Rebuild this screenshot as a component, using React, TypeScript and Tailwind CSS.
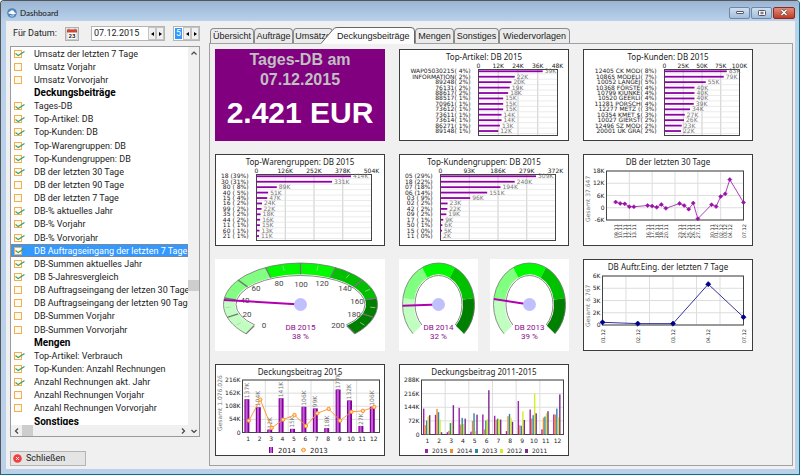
import { useState } from "react";

const MONTHS = [1, 2, 3, 4, 5, 6, 7, 8, 9, 10, 11, 12];
const DB_2015 = [137, 104, 12, 141, 15, 106, 99, 18, 177, 132, 27, 106];
const DB_2014 = [49, 135, 19, 53, 72, 27, 79, 97, 49, 85, 89, 105];
const DB_2013 = [74, 118, 60, 88, 112, 74, 84, 109, 46, 102, 95, 137];
const DB_2012 = [95, 79, 65, 56, 18, 81, 81, 88, 123, 216, 112, 91];
const DB_2011 = [102, 12, 155, 84, 105, 234, 79, 67, 77, 112, 123, 212];

type Entry = { label: string; heading?: boolean; on?: boolean };

const entries: Entry[] = [
  { label: "Umsatz der letzten 7 Tage", on: true },
  { label: "Umsatz Vorjahr" },
  { label: "Umsatz Vorvorjahr" },
  { label: "Deckungsbeiträge", heading: true },
  { label: "Tages-DB", on: true },
  { label: "Top-Artikel: DB", on: true },
  { label: "Top-Kunden: DB", on: true },
  { label: "Top-Warengruppen: DB", on: true },
  { label: "Top-Kundengruppen: DB", on: true },
  { label: "DB der letzten 30 Tage", on: true },
  { label: "DB der letzten 90 Tage" },
  { label: "DB der letzten 7 Tage" },
  { label: "DB-% aktuelles Jahr", on: true },
  { label: "DB-% Vorjahr", on: true },
  { label: "DB-% Vorvorjahr", on: true },
  { label: "DB Auftragseingang der letzten 7 Tage", on: true },
  { label: "DB-Summen aktuelles Jahr", on: true },
  { label: "DB 5-Jahresvergleich", on: true },
  { label: "DB Auftragseingang der letzen 30 Tage" },
  { label: "DB Auftragseingang der letzten 90 Tage" },
  { label: "DB-Summen Vorjahr" },
  { label: "DB-Summen Vorvorjahr" },
  { label: "Mengen", heading: true },
  { label: "Top-Artikel: Verbrauch", on: true },
  { label: "Top-Kunden: Anzahl Rechnungen", on: true },
  { label: "Anzahl Rechnungen akt. Jahr", on: true },
  { label: "Anzahl Rechnungen Vorjahr" },
  { label: "Anzahl Rechnungen Vorvorjahr" },
  { label: "Sonstiges", heading: true },
];

const SELECTED = "DB Auftragseingang der letzten 7 Tage";
const CHART = "block h-[92px] w-[170px] bg-white outline outline-1 -outline-offset-1 outline-[#3c3c3c]";
const TITLE = "fill-[#222] text-[8px] font-['Noto_Sans',sans-serif]";
const TINY = "fill-[#222] text-[6px] font-['DejaVu_Sans',sans-serif]";
const TINY_GRAY = "fill-[#777] text-[6px] font-['DejaVu_Sans',sans-serif]";
const DATE = "fill-[#222] text-[5px] font-['DejaVu_Sans',sans-serif]";

function ChartTitle({ children }: { children: string }) {
  return (
    <text x="85" y="11" textAnchor="middle" className={TITLE}>
      {children}
    </text>
  );
}

function BarRanking({ title, x0, x1, step, rows }: {
  title: string;
  x0: number;
  x1: number;
  step: number;
  rows: Array<[string, number]>;
}) {
  const max = step * 4;
  const w = x1 - x0;
  return (
    <svg viewBox="0 0 170 92" className={CHART} role="img" aria-label={title}>
      <ChartTitle>{title}</ChartTitle>
      {[1, 2, 3].map((i) => (
        <path key={i} d={`M${x0 + (w * i) / 4} 21V87`} stroke="#ccc" />
      ))}
      {rows.map((_, i) => (
        <path key={i} d={`M${x0} ${24.8 + i * 5.43}H${x1}`} stroke="#e3e3e3" strokeWidth="0.7" />
      ))}
      <rect x={x0} y="20.5" width={w} height="66" fill="none" stroke="#444" />
      {[0, 1, 2, 3, 4].map((i) => (
        <text key={i} x={x0 + (w * i) / 4} y="18.5" textAnchor="middle" className={TINY}>
          {i === 0 ? "0" : `${step * i}K`}
        </text>
      ))}
      {rows.map(([name, value], i) => {
        const y = 22.3 + i * 5.43;
        return (
          <g key={name}>
            <text x={x0 - 8} y={y + 2} textAnchor="end" className={TINY}>{name}</text>
            <rect x={x0} y={y - 0.9} width={(value / max) * w} height="1.8" fill="#9000a8" />
            <text x={x0 + (value / max) * w + 2} y={y + 2} className={TINY_GRAY}>{value}K</text>
          </g>
        );
      })}
    </svg>
  );
}

function LineChart({ title, total, x0, yLabels, min, max, slots, points, color, r, columns }: {
  title: string;
  total: string;
  x0: number;
  yLabels: string[];
  min: number;
  max: number;
  slots: number;
  points: Array<[number, number, string]>;
  color: string;
  r: number;
  columns: number;
}) {
  const x1 = 160.5;
  const top = 17;
  const bottom = 66;
  const px = (slot: number) => x0 + (slot / slots) * (x1 - x0);
  const py = (v: number) => bottom - ((v - min) / (max - min)) * (bottom - top);
  return (
    <svg viewBox="0 0 170 92" className={CHART} role="img" aria-label={title}>
      <ChartTitle>{title}</ChartTitle>
      {Array.from({ length: columns - 1 }, (_, i) => (
        <path key={i} d={`M${x0 + ((i + 1) * (x1 - x0)) / columns} ${top}V${bottom}`} stroke="#ddd" />
      ))}
      {yLabels.map((label, i) => (
        <g key={label}>
          <path d={`M${x0} ${top + (i * (bottom - top)) / 4}H${x1}`} stroke="#ddd" />
          <text x={x0 - 2} y={top + 2 + (i * (bottom - top)) / 4} textAnchor="end" className={TINY}>{label}</text>
        </g>
      ))}
      <rect x={x0} y={top} width={x1 - x0} height={bottom - top} fill="none" stroke="#444" />
      <text transform="translate(7 68) rotate(-90)" className={TINY_GRAY}>{total}</text>
      <polyline
        points={points.map(([s, v]) => `${px(s)},${py(v)}`).join(" ")}
        fill="none"
        stroke={color}
        strokeWidth="0.8"
      />
      {points.map(([s, v, date]) => (
        <g key={date}>
          <path
            d={`M${px(s)} ${py(v) - r}L${px(s) + r} ${py(v)}L${px(s)} ${py(v) + r}L${px(s) - r} ${py(v)}Z`}
            fill={color}
            stroke={color}
            strokeWidth="0.6"
          />
          <text transform={`translate(${px(s) + 2} 70) rotate(-90)`} textAnchor="end" className={DATE}>{date}</text>
        </g>
      ))}
    </svg>
  );
}

const ringColors = ["#c0ffc0", "#80ff80", "#00fb00", "#00c000", "#008000"];

function Gauge({ label, value, cx, rx, scale }: {
  label: string;
  value: number;
  cx: number;
  rx: number;
  scale?: boolean;
}) {
  const cy = 45.5;
  const ry = 41.5;
  const inX = rx - 11.5;
  const inY = 30;
  const at = (v: number, ax: number, ay: number) => {
    const a = ((135 + (v / 200) * 270) * Math.PI) / 180;
    return `${(cx + Math.cos(a) * ax).toFixed(2)} ${(cy + Math.sin(a) * ay).toFixed(2)}`;
  };
  const scaleLabels = [
    [0, 49, 66], [20, 32, 55], [40, 30, 41], [60, 41, 29], [80, 64, 24], [100, 86, 25],
    [120, 107, 24], [140, 130, 29], [160, 142, 42], [180, 139, 55], [200, 123, 66],
  ];
  return (
    <svg
      viewBox={scale ? "0 0 170 92" : "0 0 79 92"}
      className={scale ? "block h-[92px] w-[170px] bg-white" : "block h-[92px] w-[79px] bg-white"}
      role="img"
      aria-label={`${label}: ${value} %`}
    >
      {ringColors.map((c, i) => (
        <path
          key={c}
          d={`M${at(i * 40, rx, ry)}A${rx} ${ry} 0 0 1 ${at(i * 40 + 40, rx, ry)}L${at(i * 40 + 40, inX, inY)}A${inX} ${inY} 0 0 0 ${at(i * 40, inX, inY)}Z`}
          fill={c}
        />
      ))}
      <path d={`M${at(0, rx, ry)}A${rx} ${ry} 0 1 1 ${at(200, rx, ry)}`} fill="none" stroke="#777" strokeWidth="0.8" />
      <path
        d={`M${at(0, inX - 1, inY - 1)}A${inX - 1} ${inY - 1} 0 1 1 ${at(200, inX - 1, inY - 1)}`}
        fill="none"
        stroke="#888"
        strokeWidth="1"
      />
      {scale &&
        scaleLabels.map(([v, x, y]) => (
          <g key={v}>
            <path d={`M${at(v, rx, ry)}L${at(v, inX, inY)}`} stroke="#777" strokeWidth="1.3" />
            {v < 200 && <path d={`M${at(v + 10, rx - 2, ry - 2)}L${at(v + 10, rx - 7, ry - 7)}`} stroke="#b8c8b8" strokeWidth="0.8" />}
            <text x={x} y={y + 3} textAnchor="middle" className="fill-[#444] text-[8px] font-['Roboto',sans-serif]">{v}</text>
          </g>
        ))}
      <path d={`M${cx} ${cy}L${at(value, rx, ry)}`} stroke="#b000b0" strokeWidth="2" />
      <circle cx={cx} cy={cy} r="6.5" fill="#c0c0ff" />
      <text x={cx} y="71" textAnchor="middle" className="fill-[#8a0a8a] text-[8px] font-['Roboto',sans-serif]">{label}</text>
      <text x={cx} y="80" textAnchor="middle" className="fill-[#8a0a8a] text-[8px] font-['Roboto',sans-serif]">{value} %</text>
    </svg>
  );
}

function MonthGrid({ x0, x1, bottom, step }: { x0: number; x1: number; bottom: number; step: number }) {
  const h = bottom - 16;
  return (
    <>
      {[2, 4, 6, 8, 10].map((i) => (
        <path key={i} d={`M${x0 + ((x1 - x0) * i) / 12} 16V${bottom}`} stroke="#ddd" />
      ))}
      {[0, 1, 2, 3, 4].map((i) => (
        <g key={i}>
          <path d={`M${x0} ${16 + (h * i) / 4}H${x1}`} stroke="#ddd" />
          <text x={x0 - 2} y={18 + (h * i) / 4} textAnchor="end" className={TINY}>
            {i === 4 ? "0" : `${step * (4 - i)}K`}
          </text>
        </g>
      ))}
      <rect x={x0} y="16" width={x1 - x0} height={h} fill="none" stroke="#444" />
      {MONTHS.map((m, i) => (
        <text key={m} x={x0 + ((x1 - x0) * (i + 0.5)) / 12} y={bottom + 8} textAnchor="middle" className={TINY}>{m}</text>
      ))}
    </>
  );
}

function YearChart() {
  const x = (i: number) => 27.5 + 11.4 * (i + 0.5);
  const y = (v: number) => 68.5 - (v / 216) * 52.5;
  return (
    <svg viewBox="0 0 170 92" className={CHART} role="img" aria-label="Deckungsbeitrag 2015">
      <ChartTitle>Deckungsbeitrag 2015</ChartTitle>
      <MonthGrid x0={27.5} x1={164.5} bottom={68.5} step={54} />
      <text transform="translate(7 67) rotate(-90)" className={TINY_GRAY}>Gesamt 1.076.026</text>
      {DB_2015.map((v, i) => (
        <g key={i}>
          <rect x={x(i) - 3.8} y={y(v)} width="5" height={68.5 - y(v)} fill="#85009a" />
          <rect x={x(i) - 2.6} y={y(v)} width="2" height={68.5 - y(v)} fill="#c060d4" />
          <text transform={`translate(${x(i) + 0.5} ${y(v) - 1}) rotate(-90)`} className={TINY_GRAY}>{v}K</text>
        </g>
      ))}
      <polyline points={DB_2014.map((v, i) => `${x(i) + 0.7},${y(v)}`).join(" ")} fill="none" stroke="#ff9020" strokeWidth="0.9" />
      {DB_2014.map((v, i) => (
        <circle key={i} cx={x(i) + 0.7} cy={y(v)} r="1.7" fill="#ffe0b0" stroke="#ff9020" />
      ))}
      <rect x="54" y="83" width="4" height="6" fill="#85009a" />
      <rect x="55" y="83" width="2" height="6" fill="#c060d4" />
      <text x="63" y="89" className="fill-[#222] text-[7px] font-['DejaVu_Sans',sans-serif]">2014</text>
      <path d="M86 86H91" stroke="#ff9020" />
      <circle cx="88.5" cy="86" r="1.8" fill="#ffe0b0" stroke="#ff9020" />
      <text x="95" y="89" className="fill-[#222] text-[7px] font-['DejaVu_Sans',sans-serif]">2013</text>
    </svg>
  );
}

const years = [
  { year: 2015, color: "#a020b0", data: DB_2015 },
  { year: 2014, color: "#f58a2c", data: DB_2014 },
  { year: 2013, color: "#2c86a8", data: DB_2013 },
  { year: 2012, color: "#d2f020", data: DB_2012 },
  { year: 2011, color: "#7a2a90", data: DB_2011 },
];

function FiveYearChart() {
  return (
    <svg viewBox="0 0 170 92" className={CHART} role="img" aria-label="Deckungsbeitrag 2011-2015">
      <ChartTitle>Deckungsbeitrag 2011-2015</ChartTitle>
      <MonthGrid x0={22.5} x1={164.5} bottom={70.5} step={72} />
      {years.map(({ year, color, data }, s) => (
        <g key={year}>
          {data.map((v, i) => {
            const h = (v / 288) * 54.5;
            return <rect key={i} x={24 + i * 11.83 + s * 1.5} y={70.5 - h} width="1.4" height={h} fill={color} />;
          })}
          <rect x={26 + s * 25} y="85" width="3" height="4" fill={color} />
          <text x={33 + s * 25} y="89" className={TINY}>{year}</text>
        </g>
      ))}
    </svg>
  );
}

function Spinner({ name }: { name: string }) {
  return (
    <>
      <button aria-label={`${name} zurück`} className="flex w-2 items-center justify-center border border-[#c4c4c4] bg-[#f0f0f0]">
        <svg viewBox="0 0 3 4" className="h-1 w-[3px] shrink-0"><path d="M3 0V4L0 2Z" /></svg>
      </button>
      <button aria-label={`${name} vor`} className="flex w-2 items-center justify-center border border-[#c4c4c4] bg-[#f0f0f0]">
        <svg viewBox="0 0 3 4" className="h-1 w-[3px] shrink-0"><path d="M0 0V4L3 2Z" /></svg>
      </button>
    </>
  );
}

function Chevron({ d, label }: { d: string; label: string }) {
  return (
    <button aria-label={label} className="flex size-[11px] shrink-0 items-center justify-center">
      <svg viewBox="0 0 6 6" className="size-[6px]" fill="none" stroke="#444" strokeWidth="1.2"><path d={d} /></svg>
    </button>
  );
}

function EntryList() {
  const [checked, setChecked] = useState(() => entries.map((e) => !!e.on));
  return (
    <div className="flex h-[391px] flex-col border border-[#9a9aa2] bg-white">
      <div className="flex min-h-0 flex-1">
        <div className="min-w-0 flex-1 overflow-hidden">
          <ul className="flex h-[381px] flex-col text-[#222]">
            {entries.map((e, i) =>
              e.heading ? (
                <li key={e.label} className="flex flex-1 items-center pl-[23px] text-[10px] leading-3 font-bold text-black">
                  {e.label}
                </li>
              ) : (
                <li
                  key={e.label}
                  className={
                    e.label === SELECTED
                      ? "flex-1 bg-[#3399ff] text-white outline outline-1 -outline-offset-1 outline-dotted outline-[#c07838]"
                      : "flex-1"
                  }
                >
                  <label className="relative flex h-full items-center gap-3 pl-[3px] leading-3 whitespace-nowrap">
                    <input
                      type="checkbox"
                      checked={checked[i]}
                      onChange={() => setChecked(checked.map((c, k) => (k === i ? !c : c)))}
                      className="size-2 shrink-0 appearance-none border border-[#f5ae4c] bg-[#fffaf0]"
                    />
                    {checked[i] && (
                      <svg viewBox="0 0 10 6" className="absolute top-1 left-1 h-[6px] w-[10px]" fill="none" stroke="#35a06c" strokeWidth="1.2">
                        <path d="M0.5 2.5L3.2 4.6L9.5 0.6" />
                      </svg>
                    )}
                    {e.label}
                  </label>
                </li>
              )
            )}
          </ul>
        </div>
        <div className="flex w-[11px] shrink-0 flex-col bg-[#f0f0f0]">
          <Chevron label="Nach oben" d="M0.5 4.5L3 2L5.5 4.5" />
          <div className="mt-[222px] h-[11px] bg-[#cdcdcd]" />
        </div>
      </div>
      <div className="flex h-[11px] shrink-0 bg-[#f0f0f0]">
        <Chevron label="Nach links" d="M4 0.5L1.5 3L4 5.5" />
        <div className="w-[11px] bg-[#cdcdcd]" />
        <div className="flex-1" />
        <Chevron label="Nach rechts" d="M2 0.5L4.5 3L2 5.5" />
        <Chevron label="Nach unten" d="M0.5 2L3 4.5L5.5 2" />
      </div>
    </div>
  );
}

const TAB = "h-[15px] shrink-0 rounded-t-[4px] border border-b-0 border-[#8c8c8c] bg-[#ebebeb] text-center leading-[14px]";

function Tabs() {
  return (
    <div role="tablist" className="flex items-end pl-px text-[9px] text-[#222]">
      <button role="tab" className={`${TAB} w-[44px]`}>Übersicht</button>
      <button role="tab" className={`${TAB} w-[39px]`}>Aufträge</button>
      <button role="tab" className={`${TAB} w-[40px]`}>Umsätze</button>
      <button role="tab" aria-selected="true" className="relative z-10 -mb-px -ml-3 h-[17px] w-[94px] shrink-0 pl-[16px] text-left leading-4">
        <svg viewBox="0 0 94 17" className="absolute inset-0 -z-10 h-[17px] w-[94px]">
          <path d="M0 17L12 2.5Q13.5 0.5 16 0.5H90Q93.5 0.5 93.5 4V17Z" fill="#fcfcfc" />
          <path d="M0 16.5L12 2.5Q13.5 0.5 16 0.5H90Q93.5 0.5 93.5 4V16.5" fill="none" stroke="#666" />
        </svg>
        Deckungsbeiträge
      </button>
      <button role="tab" className={`${TAB} w-[39px]`}>Mengen</button>
      <button role="tab" className={`${TAB} w-[45px]`}>Sonstiges</button>
      <button role="tab" className={`${TAB} w-[71px]`}>Wiedervorlagen</button>
    </div>
  );
}

const days30: Array<[number, number, string]> = [
  [2, 2.8, "09.11"], [3, 2.1, "10.11"], [4, 1.9, "11.11"], [5, 0.5, "12.11"], [6, 0.5, "13.11"],
  [9, 1.1, "16.11"], [10, 0.8, "17.11"], [11, 0.2, "18.11"], [12, 1.6, "19.11"], [13, -0.3, "20.11"],
  [16, 2.1, "23.11"], [17, 1.1, "24.11"], [18, -0.7, "25.11"], [19, 2.3, "26.11"], [20, -5.4, "27.11"],
  [23, 1.5, "30.11"], [24, 0.6, "01.12"], [25, 5.5, "02.12"], [26, 6.8, "03.12"], [27, 13.8, "04.12"],
  [30, 2.6, "07.12"],
];

export default function App() {
  return (
    <div className="flex min-h-screen flex-col rounded-t-[4px] border border-t-[#555] border-r-[#0d6f80] border-b-[#0d6f80] border-l-[#555] bg-[#b9d1ea] font-['Liberation_Sans',sans-serif] text-[9px] text-[#222]">
      <header className="flex h-5 items-center rounded-t-[3px] bg-linear-to-b from-[#9ab5d3] to-[#b9d1ea] pr-1 pl-[6px]">
        <svg viewBox="0 0 10 10" className="mt-1 size-[10px]">
          <circle cx="5" cy="5" r="4.8" fill="#4f86b8" />
          <path d="M1.3 5.5Q1.5 3.5 3.2 3.6Q4 1.8 6 2.4Q7.4 2.8 7.2 4.2Q8.8 4.3 8.8 5.8Q6.8 6.8 5 6.2Q3 5.4 1.3 5.5Z" fill="#fff" />
          <path d="M3 7.6Q5 8.6 7 7.6" fill="none" stroke="#d6e6f4" strokeWidth="0.9" />
        </svg>
        <h1 className="mt-1 ml-[3px] flex-1 font-['Lato',sans-serif] text-[8px] text-[#111]">Dashboard</h1>
        <div className="mt-[3px] flex gap-px">
          <button aria-label="Minimieren" className="flex h-3 w-[21px] items-center justify-center rounded-[2px] border border-[#6d88a8] bg-linear-to-b from-[#cfdff0] to-[#a3bddb]">
            <span className="h-[3px] w-2 rounded-[1px] border border-[#556] bg-white" />
          </button>
          <button aria-label="Maximieren" className="flex h-3 w-[21px] items-center justify-center rounded-[2px] border border-[#6d88a8] bg-linear-to-b from-[#cfdff0] to-[#a3bddb]">
            <svg viewBox="0 0 8 6" className="h-[6px] w-2" fill="#fff" stroke="#556">
              <rect x="0.5" y="0.5" width="7" height="5" rx="0.8" />
              <rect x="3" y="2.2" width="2" height="1.6" strokeWidth="0.8" />
            </svg>
          </button>
          <button aria-label="Schließen" className="flex h-3 w-[22px] items-center justify-center rounded-[2px] border border-[#8a2a20] bg-linear-to-b from-[#e08a78] to-[#c03a24]">
            <svg viewBox="0 0 8 7" className="h-[7px] w-2">
              <path d="M1.5 1L6.5 6M6.5 1L1.5 6" stroke="#543" strokeWidth="2.6" />
              <path d="M1.5 1L6.5 6M6.5 1L1.5 6" stroke="#fff" strokeWidth="1.6" />
            </svg>
          </button>
        </div>
      </header>

      <main className="mr-1 mb-[5px] ml-[5px] flex flex-1 bg-[#f0f0f0] pr-[2px] pb-[3px] pl-1">
        <aside className="flex w-[190px] shrink-0 flex-col font-['Roboto',sans-serif]">
          <div className="flex h-[25px] items-center">
            <label htmlFor="datum" className="w-[55px] pl-[3px] whitespace-nowrap">Für Datum:</label>
            <button aria-label="Kalender" className="flex size-[14px] items-center justify-center border border-[#b0b0b0] bg-[#e8e8e8]">
              <svg viewBox="0 0 12 12" className="size-3 shrink-0">
                <rect x="1" y="2" width="10" height="9.5" fill="#fff" stroke="#aaa" strokeWidth="0.6" />
                <rect x="1" y="1.5" width="10" height="3" fill="#d8402c" />
                <path d="M3 0.5V3M9 0.5V3" stroke="#777" strokeWidth="0.9" />
                <text x="6" y="10" textAnchor="middle" className="fill-[#222] text-[6px] font-bold">23</text>
              </svg>
            </button>
            <div className="ml-3 flex h-[15px] border border-[#b4b4b4] bg-white">
              <input id="datum" defaultValue="07.12.2015" className="w-[56px] pl-[2px]" />
              <Spinner name="Datum" />
            </div>
            <div className="ml-2 flex h-[15px] border border-[#b4b4b4] bg-white">
              <input aria-label="Anzahl" defaultValue="5" className="mx-px my-px w-[7px] bg-[#3399ff] px-px text-white" />
              <Spinner name="Anzahl" />
            </div>
          </div>
          <EntryList />
          <button className="mt-[14px] flex h-[15px] w-[76px] items-center gap-1 border border-[#b4b4b4] bg-[#e4e4e4] pl-[2px]">
            <svg viewBox="0 0 10 10" className="size-[9px]">
              <circle cx="5" cy="5" r="4.8" fill="#f04040" />
              <path d="M3.4 3.4L6.6 6.6M6.6 3.4L3.4 6.6" stroke="#fff" strokeWidth="1" />
            </svg>
            Schließen
          </button>
        </aside>

        <section className="ml-[9px] flex min-w-0 flex-1 flex-col pt-[6px]">
          <Tabs />
          <div className="flex-1 border border-[#a0a0a0] pt-[5px] pl-[5px]">
            <div className="grid grid-cols-[repeat(3,170px)] gap-x-[14px] gap-y-[13px]">
              <div className="h-[92px] bg-[#800080] pt-px text-center font-bold">
                <p className="text-[16px] leading-5 text-[#c0c0c0]">Tages-DB am<br />07.12.2015</p>
                <p className="mt-[5px] text-[30px] leading-9 text-white">2.421 EUR</p>
              </div>
              <BarRanking
                title="Top-Artikel: DB 2015"
                x0={79.5}
                x1={158.5}
                step={12}
                rows={[
                  ["WAP05030215( 4%)", 39], ["INFORMATION( 2%)", 22], ["89248( 2%)", 20], ["76131( 2%)", 19],
                  ["88617( 2%)", 18], ["88517( 1%)", 15], ["70961( 1%)", 15], ["73612( 1%)", 15],
                  ["73611( 1%)", 14], ["73614( 1%)", 14], ["86271( 1%)", 13], ["89148( 1%)", 12],
                ]}
              />
              <BarRanking
                title="Top-Kunden: DB 2015"
                x0={81.5}
                x1={156.5}
                step={25}
                rows={[
                  ["12405 CK MOD( 8%)", 83], ["10865 MODELI( 7%)", 79], ["10052 LANGEJ( 5%)", 55],
                  ["10368 FÖRSTE( 4%)", 40], ["10799 KIUNKE( 4%)", 40], ["10520 GEERLI( 4%)", 40],
                  ["11281 PORSCH( 4%)", 39], ["12277 METZ (( 3%)", 34], ["10354 KMET $( 3%)", 27],
                  ["10027 GIERST( 2%)", 26], ["12496 SZ MOD( 2%)", 23], ["20001 UK GRA( 2%)", 22],
                ]}
              />
              <BarRanking
                title="Top-Warengruppen: DB 2015"
                x0={41.5}
                x1={156.5}
                step={126}
                rows={[
                  ["18 (39%)", 414], ["30 (31%)", 331], ["80 ( 8%)", 89], ["40 ( 5%)", 51], ["15 ( 4%)", 47], ["16 ( 2%)", 24],
                  ["99 ( 2%)", 22], ["35 ( 2%)", 18], ["44 ( 2%)", 16], ["11 ( 1%)", 15], ["60 ( 1%)", 13], ["21 ( 1%)", 11],
                ]}
              />
              <BarRanking
                title="Top-Kundengruppen: DB 2015"
                x0={41.5}
                x1={156.5}
                step={93}
                rows={[
                  ["05 (29%)", 309], ["18 (22%)", 240], ["07 (18%)", 194], ["06 (14%)", 151], ["03 ( 9%)", 96], ["02 ( 2%)", 23],
                  ["42 ( 2%)", 22], ["09 ( 2%)", 19], ["17 ( 1%)", 9], ["50 ( 1%)", 6], ["15 ( 0%)", 5], ["11 ( 0%)", 2],
                ]}
              />
              <LineChart
                title="DB der letzten 30 Tage"
                total="Gesamt 37.647"
                x0={23.5}
                yLabels={["18K", "12K", "6K", "0", "-6K"]}
                min={-6}
                max={18}
                slots={30}
                points={days30}
                color="#9810a8"
                r={2}
                columns={6}
              />
              <Gauge label="DB 2015" value={38} cx={85.5} rx={77} scale />
              <div className="flex justify-between">
                <Gauge label="DB 2014" value={32} cx={39.5} rx={36} />
                <Gauge label="DB 2013" value={39} cx={39.5} rx={36} />
              </div>
              <LineChart
                title="DB Auftr.Eing. der letzten 7 Tage"
                total="Gesamt 6.767"
                x0={19.5}
                yLabels={["6K", "5K", "3K", "2K", "0"]}
                min={0}
                max={6}
                slots={4}
                points={[[0, 0.33, "01.12"], [1, 0.17, "02.12"], [2, 0.17, "03.12"], [3, 5, "04.12"], [4, 0.96, "07.12"]]}
                color="#000088"
                r={2.6}
                columns={6}
              />
              <YearChart />
              <FiveYearChart />
            </div>
          </div>
        </section>
      </main>
    </div>
  );
}
